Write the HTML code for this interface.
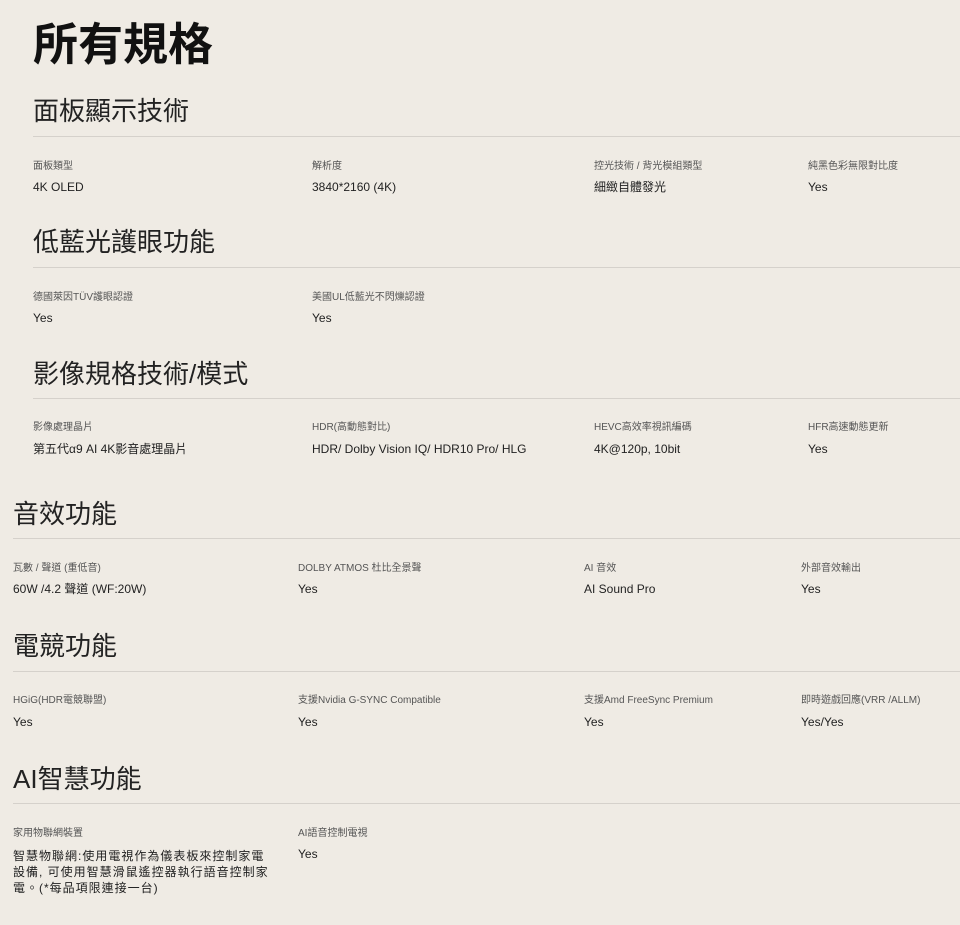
<!DOCTYPE html>
<html><head><meta charset="utf-8"><style>
html,body{margin:0;padding:0;}
body{width:960px;height:925px;background:#efebe4;position:relative;overflow:hidden;font-family:"Liberation Sans","Noto Sans CJK TC",sans-serif;}
.a{position:absolute;white-space:nowrap;}
.t{font-size:45px;font-weight:bold;color:#111;line-height:1;}
.h{font-size:26px;color:#222;line-height:1;}
.l{font-size:10px;color:#555;line-height:1;}
.v{font-size:12px;color:#222;line-height:1;}
.ln{position:absolute;height:1px;background:#d5d1cb;right:0;}
</style></head><body>
<div class="a t" style="left:33px;top:22px;">所有規格</div>

<div class="a h" style="left:33px;top:98px;">面板顯示技術</div>
<div class="ln" style="left:33px;top:136px;"></div>
<div class="a l" style="left:33px;top:162px;">面板類型</div><div class="a v" style="left:33px;top:181px;">4K OLED</div>
<div class="a l" style="left:312px;top:162px;">解析度</div><div class="a v" style="left:312px;top:181px;">3840*2160 (4K)</div>
<div class="a l" style="left:594px;top:162px;">控光技術 / 背光模組類型</div><div class="a v" style="left:594px;top:181px;">細緻自體發光</div>
<div class="a l" style="left:808px;top:162px;">純黑色彩無限對比度</div><div class="a v" style="left:808px;top:181px;">Yes</div>

<div class="a h" style="left:33px;top:229px;">低藍光護眼功能</div>
<div class="ln" style="left:33px;top:267px;"></div>
<div class="a l" style="left:33px;top:293px;">德國萊因TÜV護眼認證</div><div class="a v" style="left:33px;top:312px;">Yes</div>
<div class="a l" style="left:312px;top:293px;">美國UL低藍光不閃爍認證</div><div class="a v" style="left:312px;top:312px;">Yes</div>

<div class="a h" style="left:33px;top:361px;">影像規格技術/模式</div>
<div class="ln" style="left:33px;top:398px;"></div>
<div class="a l" style="left:33px;top:423px;">影像處理晶片</div><div class="a v" style="left:33px;top:443px;">第五代α9 AI 4K影音處理晶片</div>
<div class="a l" style="left:312px;top:423px;">HDR(高動態對比)</div><div class="a v" style="left:312px;top:443px;">HDR/ Dolby Vision IQ/ HDR10 Pro/ HLG</div>
<div class="a l" style="left:594px;top:423px;">HEVC高效率視訊編碼</div><div class="a v" style="left:594px;top:443px;">4K@120p, 10bit</div>
<div class="a l" style="left:808px;top:423px;">HFR高速動態更新</div><div class="a v" style="left:808px;top:443px;">Yes</div>

<div class="a h" style="left:13px;top:501px;">音效功能</div>
<div class="ln" style="left:13px;top:538px;"></div>
<div class="a l" style="left:13px;top:564px;">瓦數 / 聲道 (重低音)</div><div class="a v" style="left:13px;top:583px;">60W /4.2 聲道 (WF:20W)</div>
<div class="a l" style="left:298px;top:564px;">DOLBY ATMOS 杜比全景聲</div><div class="a v" style="left:298px;top:583px;">Yes</div>
<div class="a l" style="left:584px;top:564px;">AI 音效</div><div class="a v" style="left:584px;top:583px;">AI Sound Pro</div>
<div class="a l" style="left:801px;top:564px;">外部音效輸出</div><div class="a v" style="left:801px;top:583px;">Yes</div>

<div class="a h" style="left:13px;top:633px;">電競功能</div>
<div class="ln" style="left:13px;top:671px;"></div>
<div class="a l" style="left:13px;top:696px;">HGiG(HDR電競聯盟)</div><div class="a v" style="left:13px;top:716px;">Yes</div>
<div class="a l" style="left:298px;top:696px;">支援Nvidia G-SYNC Compatible</div><div class="a v" style="left:298px;top:716px;">Yes</div>
<div class="a l" style="left:584px;top:696px;">支援Amd FreeSync Premium</div><div class="a v" style="left:584px;top:716px;">Yes</div>
<div class="a l" style="left:801px;top:696px;">即時遊戲回應(VRR /ALLM)</div><div class="a v" style="left:801px;top:716px;">Yes/Yes</div>

<div class="a h" style="left:13px;top:766px;">AI智慧功能</div>
<div class="ln" style="left:13px;top:803px;"></div>
<div class="a l" style="left:13px;top:829px;">家用物聯網裝置</div>
<div class="a v" style="left:13px;top:848px;line-height:16px;letter-spacing:1px;">智慧物聯網:使用電視作為儀表板來控制家電<br>設備, 可使用智慧滑鼠遙控器執行語音控制家<br>電。(*每品項限連接一台)</div>
<div class="a l" style="left:298px;top:829px;">AI語音控制電視</div><div class="a v" style="left:298px;top:848px;">Yes</div>
</body></html>
